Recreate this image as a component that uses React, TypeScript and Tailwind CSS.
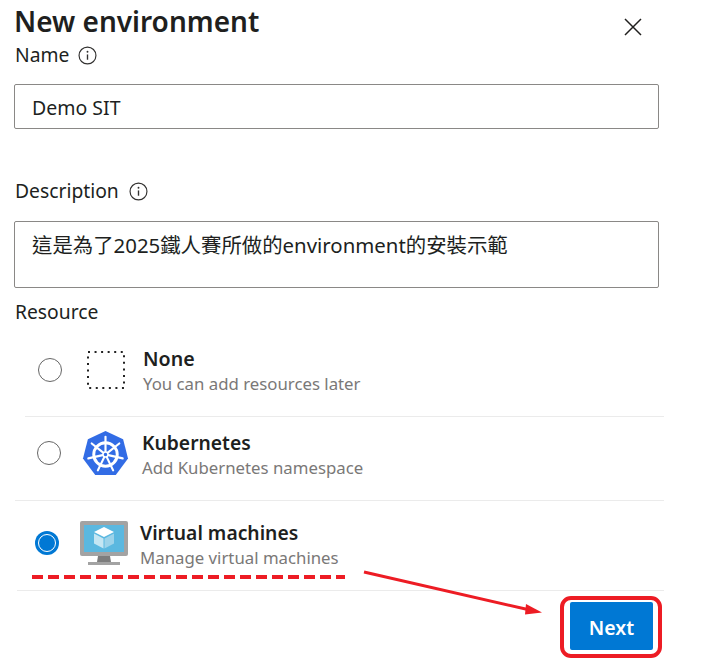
const font = { fontFamily: '"Noto Sans", "Noto Sans CJK TC", sans-serif' };

function InfoIcon() {
  return (
    <svg width="19" height="19" viewBox="0 0 18 18" fill="none" stroke="#323130" strokeWidth="1.1">
      <circle cx="9" cy="9" r="8" />
      <path d="M9 8v5" strokeWidth="1.3" />
      <circle cx="9" cy="5.5" r="0.9" fill="#323130" stroke="none" />
    </svg>
  );
}

function CloseIcon() {
  return (
    <svg width="18" height="18" viewBox="0 0 18 18" stroke="#201f1e" strokeWidth="1.5">
      <path d="M1 1l16 16M17 1L1 17" />
    </svg>
  );
}

const spokes = [0, 51.43, 102.86, 154.29, 205.71, 257.14, 308.57];

function KubeIcon() {
  return (
    <svg width="47" height="47" viewBox="0 0 48 48">
      <path d="M24 1 L42 9.5 L47 29 L34.5 46 L13.5 46 L1 29 L6 9.5 Z" fill="#326ce5" />
      <circle cx="24" cy="25" r="12" fill="none" stroke="#fff" strokeWidth="3" />
      {spokes.map((a) => (
        <path
          key={a}
          d="M24 22V7"
          stroke="#fff"
          strokeWidth="2.2"
          strokeLinecap="round"
          transform={`rotate(${a} 24 25)`}
        />
      ))}
      <circle cx="24" cy="25" r="2.5" fill="#326ce5" stroke="#fff" strokeWidth="1.5" />
    </svg>
  );
}

function VmIcon() {
  return (
    <svg width="50" height="46" viewBox="0 0 50 46">
      <rect x="0" y="0" width="48" height="35" rx="2" fill="#a3a3a3" />
      <rect x="4" y="4" width="40" height="27" fill="#5bb8e0" />
      <path d="M18 35h12l1 6H17z" fill="#7d7d7d" />
      <rect x="8" y="41" width="32" height="3" fill="#a3a3a3" />
      <path d="M24 6l10 5-10 5-10-5z" fill="#fff" />
      <path d="M14 12.5l9.5 5v10l-9.5-5z" fill="#c5e6f3" />
      <path d="M34 12.5l-9.5 5v10l9.5-5z" fill="#9dd3ea" />
    </svg>
  );
}

function NoneIcon() {
  return (
    <svg width="38" height="38" viewBox="0 0 38 38">
      <rect
        x="1"
        y="1"
        width="36"
        height="36"
        fill="none"
        stroke="#222"
        strokeWidth="2"
        strokeDasharray="2 4.55"
      />
    </svg>
  );
}

function Radio({ on }: { on?: boolean }) {
  if (on) {
    return (
      <div className="w-[24px] h-[24px] rounded-full bg-[#0078d4] flex items-center justify-center">
        <div className="w-[18px] h-[18px] rounded-full border border-white" />
      </div>
    );
  }
  return <div className="w-[24px] h-[24px] rounded-full border border-[#666] bg-white" />;
}

export default function App() {
  return (
    <div className="relative w-[702px] h-[670px] bg-white overflow-hidden text-[#201f1e]" style={font}>
      <div className="flex items-start justify-between pl-[14px] pr-[60px] h-[43px]">
        <h1 className="text-[28px] leading-[43px] font-semibold">New environment</h1>
        <div className="mt-[18px]"><CloseIcon /></div>
      </div>

      <div className="pl-[15px] flex items-center gap-[9px] h-[24px] text-[19.3px]">
        Name <InfoIcon />
      </div>
      <div className="mt-[17px] ml-[14px] w-[645px] h-[45px] rounded-[2px] border border-[#8a8886] pl-[17px] pt-[2px] flex items-center text-[19.5px]">
        Demo SIT
      </div>

      <div className="mt-[50px] pl-[15px] flex items-center gap-[10px] h-[24px] text-[19.3px]">
        Description <InfoIcon />
      </div>
      <div className="mt-[18px] ml-[14px] w-[645px] h-[67px] rounded-[2px] border border-[#8a8886] pl-[17px] pt-[10px] text-[20.4px] leading-[26px]">
        這是為了2025鐵人賽所做的environment的安裝示範
      </div>

      <div className="mt-[12px] pl-[15px] h-[24px] flex items-center text-[19.3px]">Resource</div>

      <div className="ml-[25px] w-[639px] h-[93px] flex items-center border-b border-[#ebebeb]">
        <div className="ml-[13px] -mt-[1px]"><Radio /></div>
        <div className="ml-[25px]"><NoneIcon /></div>
        <div className="ml-[18px] pt-[2px]">
          <div className="text-[19.6px] leading-[26px] font-semibold">None</div>
          <div className="text-[16.8px] leading-[24px] text-[#7a7877]">You can add resources later</div>
        </div>
      </div>

      <div className="ml-[15px] w-[649px] h-[84px] flex items-center border-b border-[#ebebeb] pb-[10px]">
        <div className="ml-[22px] -mt-[1px]"><Radio /></div>
        <div className="ml-[21px] -mt-[1px]"><KubeIcon /></div>
        <div className="ml-[13px] pt-[2px]">
          <div className="text-[19.3px] leading-[26px] font-semibold">Kubernetes</div>
          <div className="text-[16.8px] leading-[24px] text-[#7a7877]">Add Kubernetes namespace</div>
        </div>
      </div>

      <div className="ml-[17px] w-[647px] h-[90px] flex items-start border-b border-[#ebebeb] pt-[20px]">
        <div className="ml-[18px] mt-[10px]"><Radio on /></div>
        <div className="ml-[21px]"><VmIcon /></div>
        <div className="ml-[10px] -mt-[1px]">
          <div className="text-[19.3px] leading-[26px] font-semibold">Virtual machines</div>
          <div className="text-[16.8px] leading-[24px] text-[#7a7877]">Manage virtual machines</div>
        </div>
      </div>

      <div className="mt-[11px] ml-[570px] w-[83px] h-[48px] rounded-[2px] bg-[#0078d4] text-white text-[19.5px] font-semibold flex items-center justify-center pt-[3px]">
        Next
      </div>

      {/* red annotations drawn over the page */}
      <svg className="absolute left-0 top-0 pointer-events-none" width="702" height="670">
        <path d="M32 577H345" stroke="#ed1c24" strokeWidth="4" strokeDasharray="11 5" />
        <path d="M364 572L530 610" stroke="#ed1c24" strokeWidth="3" />
        <path d="M542 612.5L526 604L525 614.5Z" fill="#ed1c24" />
        <rect x="562" y="598" width="98" height="58" rx="9" fill="none" stroke="#ed1c24" strokeWidth="4" />
      </svg>
    </div>
  );
}
